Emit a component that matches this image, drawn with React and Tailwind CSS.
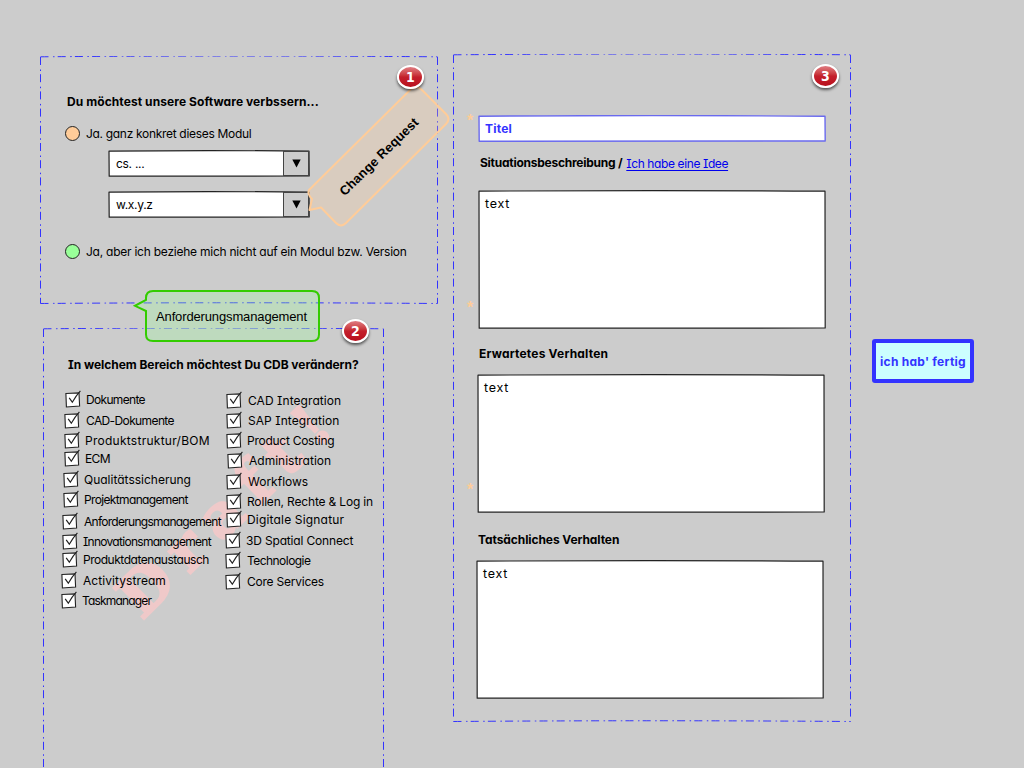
import React, { useLayoutEffect, useRef } from "react";

const HAND = "font-[family-name:'Inter','Liberation_Sans',sans-serif]";

/* Text whose tracking is computed so that it fills a given width. */
function T({ w, className = "", children }) {
  const ref = useRef(null);
  useLayoutEffect(() => {
    const el = ref.current;
    el.style.letterSpacing = "0px";
    const n = el.textContent.length;
    el.style.letterSpacing = (w - el.offsetWidth) / n + "px";
  }, [w, children]);
  return (
    <span ref={ref} className={"inline-block whitespace-pre " + className}>
      {children}
    </span>
  );
}

/* Dash-dot outline of a group. */
function Frame({ w, h }) {
  return (
    <svg className="pointer-events-none absolute inset-0" width={w} height={h} viewBox={`0 0 ${w} ${h}`} fill="none" stroke="#3333ff" strokeWidth="1" strokeDasharray="8 4.5 1.5 3.2">
      <path d={`M0.5 0.8 Q${w / 2} -0.8 ${w - 0.5} 0.8`} />
      <path d={`M${w - 0.5} 1 V${h - 0.5}`} />
      <path d={`M0.5 ${h - 0.5} Q${w / 2} ${h - 2} ${w - 0.5} ${h - 0.5}`} />
      <path d={`M0.5 1 V${h - 0.5}`} />
    </svg>
  );
}

/* Slightly uneven rectangle drawn behind a field. */
function Sketch({ w, h, stroke = "#222222", sw = 1.2 }) {
  return (
    <svg className="absolute inset-0" width={w} height={h} viewBox={`0 0 ${w} ${h}`}>
      <path d={`M1 1.2 Q${w / 2} 0 ${w - 1} 1.2 L${w - 0.8} ${h - 1} Q${w / 2} ${h - 0.6} 1.2 ${h - 0.8} Z`} fill="#fff" stroke={stroke} strokeWidth={sw} strokeLinejoin="round" />
    </svg>
  );
}

function Badge({ n, className }) {
  return (
    <div className={"absolute z-20 flex h-[24px] w-[27px] items-center justify-center rounded-[50%] border-[2px] border-white bg-linear-to-b from-[#df7b82] from-0% via-[#c4202c] via-50% to-[#b90f1d] pb-[1px] text-[14px] leading-none font-bold text-white shadow-[0_2px_3px_rgba(0,0,0,0.6)] font-[family-name:'DejaVu_Sans_Condensed','DejaVu_Sans',sans-serif] " + className}>
      {n}
    </div>
  );
}

function Check({ label, w, gap, row }) {
  return (
    <label className={"flex h-[18px] items-center " + row}>
      <svg width="16" height="18" viewBox="0 0 16 18" className="shrink-0 overflow-visible" fill="none" stroke="#222">
        <path d="M0.9 2.5 L14 1.9 L14.6 15.1 L1.4 16 Z" fill="#fff" strokeWidth="1.1" />
        <path d="M4.2 6.8 L7.3 11.2 Q11 4.6 15.4 -0.2" strokeWidth="1.15" />
      </svg>
      <span className={gap}>
        <T w={w}>{label}</T>
      </span>
    </label>
  );
}

function Combo({ value, w, className }) {
  return (
    <div className={"relative flex h-[27px] w-[202px] " + className}>
      <Sketch w={202} h={27} />
      <div className="relative flex flex-1 items-center pl-[8px]">
        <T w={w}>{value}</T>
      </div>
      <div className="relative my-[1px] mr-[1px] flex w-[26px] items-center justify-center border border-[#444] bg-[#ccc]">
        <svg width="9" height="9" viewBox="0 0 9 9">
          <path d="M0.3 0.5 H8.7 L4.5 8.5 Z" fill="#000" />
        </svg>
      </div>
    </div>
  );
}

function TextArea({ className }) {
  return (
    <div className={"relative h-[139px] w-[348px] " + className}>
      <Sketch w={348} h={139} />
      <div className="relative pt-[5px] pl-[7px]">
        <T w={25} className="text-[12.5px]">text</T>
      </div>
    </div>
  );
}

function Star({ className }) {
  return (
    <span className={"absolute text-[16px] leading-[16px] font-bold text-[#ffcc99] font-[family-name:'Liberation_Sans',sans-serif] " + className}>*</span>
  );
}

const LEFT = [
  ["Dokumente", 59, "ml-[22px]", "pl-[5px]"],
  ["CAD-Dokumente", 88, "mt-[3px] ml-[21px]", "pl-[6px]"],
  ["Produktstruktur/BOM", 125, "mt-[2px] ml-[21px]", "pl-[5px]"],
  ["ECM", 25, "ml-[21px]", "pl-[5px]"],
  ["Qualitätssicherung", 107, "mt-[3px] ml-[20px]", "pl-[5px]"],
  ["Projektmanagement", 104, "mt-[2px] ml-[20px]", "pl-[5px]"],
  ["Anforderungsmanagement", 137, "mt-[4px] ml-[19px]", "pl-[6px]"],
  ["Innovationsmanagement", 128, "mt-[2px] ml-[19px]", "pl-[5px]"],
  ["Produktdatenaustausch", 126, "ml-[19px]", "pl-[5px]"],
  ["Activitystream", 83, "mt-[3px] ml-[18px]", "pl-[6px]"],
  ["Taskmanager", 69, "mt-[2px] ml-[18px]", "pl-[5px]"],
];

const RIGHT = [
  ["CAD Integration", 93, "mt-[1px]", "pl-[6px]"],
  ["SAP Integration", 91, "mt-[2px]", "pl-[6px]"],
  ["Product Costing", 87, "mt-[2px]", "pl-[5px]"],
  ["Administration", 82, "mt-[2px] ml-[1px]", "pl-[6px]"],
  ["Workflows", 60, "mt-[3px]", "pl-[6px]"],
  ["Rollen, Rechte & Log in", 126, "mt-[2px]", "pl-[5px]"],
  ["Digitale Signatur", 97, "", "pl-[5px]"],
  ["3D Spatial Connect", 107, "mt-[3px] -ml-[1px]", "pl-[5px]"],
  ["Technologie", 63, "mt-[2px] -ml-[1px]", "pl-[6px]"],
  ["Core Services", 77, "mt-[3px] -ml-[1px]", "pl-[6px]"],
];

export default function App() {
  return (
    <main className={"relative flex h-[768px] w-[1024px] items-start overflow-hidden bg-[#cccccc] text-[12px] leading-[18px] text-black [font-feature-settings:'cv11','cv08'] " + HAND}>
      <div className="w-[453px] shrink-0 pt-[56px]">
        <section className="relative ml-[40px] h-[248px] w-[398px] pt-[37px] pl-[25px]">
          <Frame w={398} h={248} />
          <h2 className="h-[18px] pl-[2px] font-bold"><T w={252}>Du möchtest unsere Software verbssern...</T></h2>
          <label className="mt-[14px] flex h-[18px] items-center gap-[6px]">
            <span className="mb-[1px] h-[15px] w-[15px] rounded-full border border-[#222] bg-[#ffcc99]" />
            <T w={165}>Ja. ganz konkret dieses Modul</T>
          </label>
          <Combo value="cs. ..." w={28} className="mt-[7px] ml-[43px]" />
          <Combo value="w.x.y.z" w={37} className="mt-[14px] ml-[43px]" />
          <label className="mt-[25px] flex h-[18px] items-center gap-[6px]">
            <span className="mb-[1px] h-[15px] w-[15px] rounded-full border border-[#222] bg-[#99ff99]" />
            <T w={321}>Ja, aber ich beziehe mich nicht auf ein Modul bzw. Version</T>
          </label>
        </section>

        <section className="relative mt-[24px] ml-[43px] h-[460px] w-[341px] pt-[28px]">
          <Frame w={341} h={460} />
          <div className="absolute top-[242px] left-[104px] origin-bottom-left -rotate-[44.5deg] text-[60px] leading-[56px] font-bold text-[#efc9c9] [-webkit-text-stroke:2px_#efc9c9] font-[family-name:'DejaVu_Serif',serif]">
            <T w={284}>Draft!</T>
          </div>
          <h2 className="relative h-[18px] pl-[25px] font-bold"><T w={291}>In welchem Bereich möchtest Du CDB verändern?</T></h2>
          <div className="relative flex pt-[17px]">
            <div className="w-[183px] shrink-0">
              {LEFT.map(([label, w, row, gap]) => <Check key={label} label={label} w={w} row={row} gap={gap} />)}
            </div>
            <div className="shrink-0">
              {RIGHT.map(([label, w, row, gap]) => <Check key={label} label={label} w={w} row={row} gap={gap} />)}
            </div>
          </div>
          <Badge n="2" className="-top-[9px] left-[299px]" />
        </section>
      </div>

      <section className="relative mt-[54px] mr-[1px] h-[668px] w-[398px] shrink-0 pt-[61px] pl-[25px]">
        <Frame w={398} h={668} />
        <Badge n="3" className="top-[10px] left-[359px]" />
        <Star className="top-[59px] left-[14px]" />
        <Star className="top-[246px] left-[14px]" />
        <Star className="top-[428px] left-[14px]" />
        <div className="relative flex h-[27px] w-[348px] items-center pl-[7px] font-bold text-[#3333ff]">
          <Sketch w={348} h={27} stroke="#6a6aee" sw={1.4} />
          <T w={27} className="relative">Titel</T>
        </div>
        <h2 className="mt-[12px] flex h-[18px] pl-[2px]">
          <T w={142} className="font-bold">Situationsbeschreibung /</T>
          <a className="ml-[4px] pt-[1px] text-[#0000ee]"><T w={102} className="underline underline-offset-[2px]">Ich habe eine Idee</T></a>
        </h2>
        <TextArea className="mt-[18px]" />
        <h2 className="mt-[16px] h-[18px] pl-[1px] font-bold"><T w={129}>Erwartetes Verhalten</T></h2>
        <TextArea className="mt-[11px] -ml-[1px]" />
        <h2 className="mt-[18px] h-[18px] font-bold"><T w={141}>Tatsächliches Verhalten</T></h2>
        <TextArea className="mt-[11px] -ml-[2px]" />
      </section>

      <button className="mt-[339px] ml-[20px] flex h-[44px] w-[102px] shrink-0 items-center justify-center rounded-[3px] border-4 border-[#3333ff] bg-[#ccffff] pt-[2px] font-bold text-[#3333ff]">
        <T w={86}>ich hab' fertig</T>
      </button>

      <div className="absolute top-[284px] left-[132px] z-10 h-[64px] w-[190px]">
        <svg className="absolute inset-0" width="190" height="64" viewBox="0 0 190 64">
          <path d="M21 7 H180 Q187 7 187 14 V50.5 Q187 57 180 57 H21 Q14 57 14 50.5 V27 L3 21.8 L14 16 V14 Q14 7 21 7 Z" fill="#99ff99" fillOpacity="0.28" stroke="#33cc00" strokeWidth="2" />
        </svg>
        <div className="relative pt-[24px] pl-[24px] text-[13px] font-[family-name:'Liberation_Sans',sans-serif]">
          <T w={151}>Anforderungsmanagement</T>
        </div>
      </div>

      <div className="absolute top-[80px] left-[300px] z-10 flex h-[154px] w-[156px] items-center justify-center">
        <svg className="absolute inset-0" width="156" height="154" viewBox="0 0 156 154">
          <path d="M9 110 L110 10 Q116 4 122 10 L146 34 Q151 39 146 44 L46 143 Q41 148 36 143 L21 127.5 L9.5 130 L12 119 Q7 114 9 110 Z" fill="#ffcc99" fillOpacity="0.25" stroke="#ffcc99" strokeWidth="2" strokeLinejoin="round" />
        </svg>
        <div className="relative left-[1px] -rotate-[44.5deg] text-[13px] font-bold font-[family-name:'Liberation_Sans',sans-serif]">
          <T w={105}>Change Request</T>
        </div>
      </div>
      <Badge n="1" className="top-[65px] left-[397px]" />
    </main>
  );
}
